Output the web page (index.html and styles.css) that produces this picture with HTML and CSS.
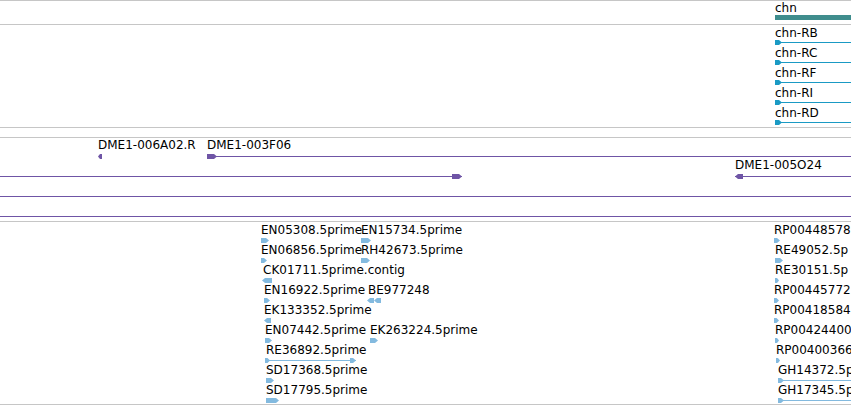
FILE: index.html
```html
<!DOCTYPE html>
<html lang="en">
<head>
    <meta charset="UTF-8">
    <meta name="viewport" content="width=device-width, initial-scale=1.0">
    <title>chn region tracks</title>
    <link rel="stylesheet" href="styles.css">
</head>
<body>
    <div class="tracks">
        <div class="track track-gene" id="gene"></div>
        <div class="track track-tx" id="tx"></div>
        <div class="track track-empty"></div>
        <div class="track track-clone" id="clone"></div>
        <div class="track track-est" id="est"></div>
    </div>

<script>
    // x = left edge in px, y = row top inside the track, w = glyph width
    // head: where the arrow sits ('start' / 'end'), dir: 1 right, -1 left
    const tracks = {
        gene: [
            { x: 775, y: 1, w: 90, label: 'chn', shape: 'bar' }
        ],
        tx: [
            { x: 775, y: 2, w: 90, label: 'chn-RB', head: 'start', dir: 1, hw: 7 },
            { x: 775, y: 22, w: 90, label: 'chn-RC', head: 'start', dir: 1, hw: 7 },
            { x: 775, y: 42, w: 90, label: 'chn-RF', head: 'start', dir: 1, hw: 7 },
            { x: 775, y: 62, w: 90, label: 'chn-RI', head: 'start', dir: 1, hw: 7 },
            { x: 775, y: 82, w: 90, label: 'chn-RD', head: 'start', dir: 1, hw: 7 }
        ],
        clone: [
            { x: 98, y: 1, w: 4, label: 'DME1-006A02.R', head: 'start', dir: -1, hw: 4, noLine: true },
            { x: 207, y: 1, w: 660, label: 'DME1-003F06', head: 'start', dir: 1, hw: 10 },
            { x: -10, y: 36, w: 472, head: 'end', dir: 1, hw: 10 },
            { x: 735, y: 21, w: 130, label: 'DME1-005O24', head: 'start', dir: -1, hw: 8 },
            { x: -10, y: 56, w: 880 },
            { x: -10, y: 76, w: 880 }
        ],
        est: [
            { x: 261, y: 2, w: 8, label: 'EN05308.5prime', dir: 1 },
            { x: 261, y: 22, w: 6, label: 'EN06856.5prime', dir: 1 },
            { x: 262, y: 42, w: 10, label: 'CK01711.5prime.contig', dir: -1, lx: 1 },
            { x: 264, y: 62, w: 6, label: 'EN16922.5prime', dir: 1 },
            { x: 264, y: 82, w: 7, label: 'EK133352.5prime', dir: -1 },
            { x: 265, y: 102, w: 7, label: 'EN07442.5prime', dir: 1 },
            { x: 265, y: 122, w: 91, label: 'RE36892.5prime', head: 'end', dir: 1, hw: 6, tail: 5, lx: 1 },
            { x: 266, y: 142, w: 8, label: 'SD17368.5prime', dir: 1 },
            { x: 266, y: 162, w: 13, label: 'SD17795.5prime', dir: 1 },
            { x: 361, y: 2, w: 10, label: 'EN15734.5prime', dir: 1 },
            { x: 361, y: 22, w: 9, label: 'RH42673.5prime', dir: 1 },
            { x: 367, y: 62, w: 14, label: 'BE977248', dir: -1, twin: true, lx: 1 },
            { x: 370, y: 102, w: 8, label: 'EK263224.5prime', dir: 1 },
            { x: 774, y: 2, w: 6, label: 'RP00448578', dir: 1 },
            { x: 775, y: 22, w: 8, label: 'RE49052.5p', dir: 1 },
            { x: 775, y: 42, w: 4, label: 'RE30151.5p', dir: 1 },
            { x: 774, y: 62, w: 5, label: 'RP00445772', dir: 1 },
            { x: 774, y: 82, w: 5, label: 'RP00418584', dir: 1 },
            { x: 775, y: 102, w: 4, label: 'RP00424400', dir: 1 },
            { x: 776, y: 122, w: 4, label: 'RP00400366', dir: 1 },
            { x: 778, y: 142, w: 90, label: 'GH14372.5p', head: 'start', dir: 1, hw: 6 },
            { x: 778, y: 162, w: 90, label: 'GH17345.5p', head: 'start', dir: 1, hw: 6 }
        ]
    };

    const NS = 'http://www.w3.org/2000/svg';

    function arrow(a, hw, dir) {
        const tip = Math.min(3, hw / 2);
        if (dir > 0) {
            return [[a, 0], [a + hw - tip, 0], [a + hw, 2.5], [a + hw - tip, 5], [a, 5]];
        }
        return [[a + tip, 0], [a + hw, 0], [a + hw, 5], [a + tip, 5], [a, 2.5]];
    }

    function poly(svg, pts) {
        const p = document.createElementNS(NS, 'polygon');
        p.setAttribute('points', pts.map(pt => pt.join(',')).join(' '));
        svg.appendChild(p);
    }

    function glyph(f) {
        const svg = document.createElementNS(NS, 'svg');
        svg.setAttribute('class', 'glyph');
        svg.setAttribute('width', f.w);
        svg.setAttribute('height', 5);

        if (f.shape === 'bar') {
            const r = document.createElementNS(NS, 'rect');
            r.setAttribute('width', f.w);
            r.setAttribute('height', 5);
            svg.appendChild(r);
            return svg;
        }

        // plain block arrow (short ESTs)
        if (!f.head && f.dir) {
            if (f.twin) {
                const half = f.w / 2;
                poly(svg, arrow(0, half, f.dir));
                poly(svg, arrow(half, half, f.dir));
            } else {
                poly(svg, arrow(0, f.w, f.dir));
            }
            return svg;
        }

        if (!f.noLine) {
            const l = document.createElementNS(NS, 'rect');
            l.setAttribute('y', 2);
            l.setAttribute('width', f.w);
            l.setAttribute('height', 1);
            svg.appendChild(l);
        }
        if (f.head) {
            const a = f.head === 'start' ? 0 : f.w - f.hw;
            poly(svg, arrow(a, f.hw, f.dir));
        }
        if (f.tail) {
            poly(svg, arrow(0, f.tail, 1));
        }
        return svg;
    }

    Object.keys(tracks).forEach(id => {
        const box = document.getElementById(id);
        tracks[id].forEach(f => {
            const el = document.createElement('div');
            el.className = 'feature';
            el.style.left = f.x + 'px';
            el.style.top = f.y + 'px';
            if (f.label) {
                const s = document.createElement('span');
                s.className = 'label';
                s.textContent = f.label;
                if (f.lx) s.style.marginLeft = f.lx + 'px';
                el.appendChild(s);
            } else {
                el.classList.add('bare');
            }
            el.appendChild(glyph(f));
            box.appendChild(el);
        });
    });
</script>
</body>
</html>
```

FILE: styles.css
```css
/* track view */

body {
    margin: 0;
    background: #fff;
    font-family: 'DejaVu Sans', 'Liberation Sans', sans-serif;
    color: #000;
    overflow: hidden;
}

.tracks {
    display: flex;
    flex-direction: column;
    border-top: 1px solid #c6c6c6;
}

.track {
    position: relative;
    overflow: hidden;
    border-bottom: 1px solid #c6c6c6;
}

.track-gene { height: 23px; }
.track-tx { height: 102px; }
.track-empty { height: 9px; }
.track-clone { height: 83px; }
.track-est { height: 182px; }

.feature {
    position: absolute;
    display: flex;
    flex-direction: column;
    align-items: flex-start;
}

.label {
    font-size: 12px;
    line-height: 12px;
    white-space: nowrap;
}

.glyph {
    display: block;
    overflow: visible;
}

.feature.bare .glyph { margin-top: 0; }

.track-gene .glyph { margin-top: 1px; fill: #3f8d8d; }
.track-tx .glyph { margin-top: 1px; fill: #1a9ac4; }
.track-clone .glyph { margin-top: 3px; fill: #6f55a6; }
.track-est .glyph { margin-top: 2px; fill: #83badf; }
```
